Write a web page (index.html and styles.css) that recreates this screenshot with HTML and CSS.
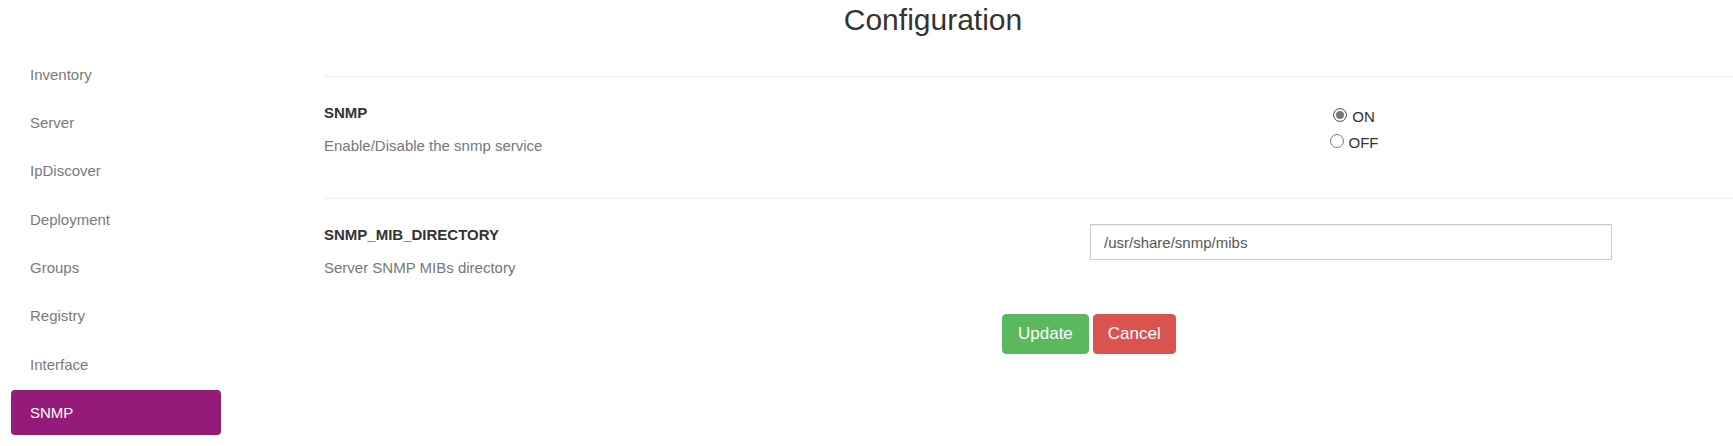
FILE: index.html
```html
<!DOCTYPE html>
<html lang="en">
<head>
<meta charset="utf-8">
<title>Configuration</title>
<link rel="stylesheet" href="styles.css">
</head>
<body>
<div class="page">
  <h1 class="page-title">Configuration</h1>
  <div class="layout">
    <nav class="sidebar">
      <a class="nav-item" href="#">Inventory</a>
      <a class="nav-item" href="#">Server</a>
      <a class="nav-item" href="#">IpDiscover</a>
      <a class="nav-item" href="#">Deployment</a>
      <a class="nav-item" href="#">Groups</a>
      <a class="nav-item" href="#">Registry</a>
      <a class="nav-item" href="#">Interface</a>
      <a class="nav-item active" href="#">SNMP</a>
    </nav>
    <main class="main">
      <div class="row row-first">
        <div class="row-label">
          <div class="label">SNMP</div>
          <div class="desc">Enable/Disable the snmp service</div>
        </div>
        <div class="row-value radios">
          <label class="radio-line"><input type="radio" name="snmp" checked><span>ON</span></label>
          <label class="radio-line"><input type="radio" name="snmp"><span>OFF</span></label>
        </div>
      </div>
      <div class="row">
        <div class="row-label">
          <div class="label">SNMP_MIB_DIRECTORY</div>
          <div class="desc">Server SNMP MIBs directory</div>
        </div>
        <div class="row-value">
          <input class="text-input" type="text" value="/usr/share/snmp/mibs">
        </div>
      </div>
      <div class="actions">
        <button class="btn btn-success" type="button">Update</button>
        <button class="btn btn-danger" type="button">Cancel</button>
      </div>
    </main>
  </div>
</div>
</body>
</html>
```
FILE: styles.css
```css
* { box-sizing: border-box; }
html, body { margin: 0; padding: 0; background: #fff; }
body {
  font-family: "Liberation Sans", Arial, sans-serif;
  font-size: 15px;
  color: #333;
}
.page-title {
  margin: 0 0 0 133px;
  padding: 3px 0;
  font-size: 30px;
  line-height: 34px;
  font-weight: normal;
  text-align: center;
  color: #333;
}
.layout {
  display: flex;
  align-items: flex-start;
}
.sidebar {
  width: 221px;
  flex: none;
  padding: 11.5px 0 0 11px;
  display: flex;
  flex-direction: column;
  gap: 3.36px;
}
.nav-item {
  display: block;
  height: 45px;
  line-height: 45px;
  padding-left: 19px;
  color: #7a7a7a;
  text-decoration: none;
  border-radius: 4px;
}
.nav-item.active {
  background: #951b7a;
  color: #fff;
}
.main {
  flex: 1;
  margin-left: 103px;
  padding-top: 36px;
}
.row {
  display: grid;
  grid-template-columns: 766px 522px 1fr;
  border-top: 1px solid #eee;
}
.row-first { padding-bottom: 42px; }
.row-label { padding-top: 26px; }
.label {
  font-weight: bold;
  line-height: 20px;
  color: #333;
}
.desc {
  margin-top: 13px;
  line-height: 20px;
  color: #777;
}
.row-value { padding-top: 25px; }
.radios {
  display: flex;
  flex-direction: column;
  padding-left: 6px;
  padding-top: 25px;
}
.radio-line {
  display: flex;
  align-items: center;
  justify-content: center;
  height: 26px;
  color: #333;
}
.radio-line span { padding-top: 2px; }
.radio-line input {
  appearance: none;
  -webkit-appearance: none;
  width: 14px;
  height: 14px;
  margin: 0 5px 0 0;
  border: 1px solid #7a7a7a;
  border-radius: 50%;
  background: #fff;
}
.radio-line input:checked {
  border-color: #6a6a6a;
  background: #777;
  box-shadow: inset 0 0 0 2px #fff;
}
.text-input {
  display: block;
  width: 100%;
  height: 36px;
  padding: 0 13px;
  border: 1px solid #ccc;
  border-radius: 0;
  box-shadow: inset 0 1px 1px rgba(0,0,0,0.075);
  font-family: "Liberation Sans", Arial, sans-serif;
  font-size: 15px;
  color: #555;
  background: #fff;
}
.actions {
  display: flex;
  gap: 4px;
  margin-top: 36px;
  padding-left: 678px;
}
.btn {
  height: 40px;
  padding: 0 15px;
  border: 1px solid transparent;
  border-radius: 4px;
  font-family: "Liberation Sans", Arial, sans-serif;
  font-size: 17px;
  color: #fff;
  cursor: pointer;
}
.btn-success { background: #5cb85c; border-color: #5cb85c; }
.btn-danger { background: #d9534f; border-color: #d9534f; padding: 0 14px; }
```
